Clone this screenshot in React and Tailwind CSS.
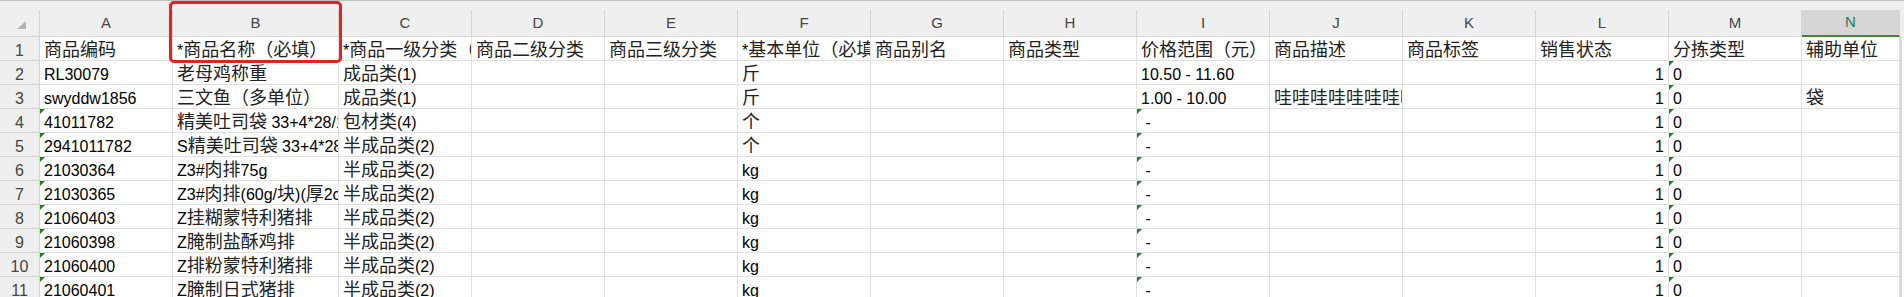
import React from "react";

const cols = [
  { k: "A", w: "w-[133px]" },
  { k: "B", w: "w-[166px]" },
  { k: "C", w: "w-[133px]" },
  { k: "D", w: "w-[133px]" },
  { k: "E", w: "w-[133px]" },
  { k: "F", w: "w-[133px]" },
  { k: "G", w: "w-[133px]" },
  { k: "H", w: "w-[133px]" },
  { k: "I", w: "w-[133px]" },
  { k: "J", w: "w-[133px]" },
  { k: "K", w: "w-[133px]" },
  { k: "L", w: "w-[133px]" },
  { k: "M", w: "w-[133px]" },
  { k: "N", w: "w-[98px]" },
];

const tri = (t) => ({ t, tri: true });
const num = (t) => ({ t, right: true });

const mkRow = (code, name, cat, unit, opts = {}) => [
  opts.codeTri ? tri(code) : code,
  name,
  cat,
  "",
  "",
  unit,
  "",
  "",
  opts.price ? opts.price : tri(" -"),
  opts.desc || "",
  "",
  num("1"),
  tri("0"),
  opts.aux || "",
];

const rows = [
  [
    "商品编码",
    "*商品名称（必填）",
    "*商品一级分类（必填）",
    "商品二级分类",
    "商品三级分类",
    "*基本单位（必填）",
    "商品别名",
    "商品类型",
    "价格范围（元）",
    "商品描述",
    "商品标签",
    "销售状态",
    "分拣类型",
    "辅助单位",
  ],
  mkRow("RL30079", "老母鸡称重", "成品类(1)", "斤", { price: "10.50 - 11.60" }),
  mkRow("swyddw1856", "三文鱼（多单位）", "成品类(1)", "斤", {
    price: "1.00 - 10.00",
    desc: "哇哇哇哇哇哇哇哇哇哇",
    aux: "袋",
  }),
  mkRow("41011782", "精美吐司袋 33+4*28/100个", "包材类(4)", "个", { codeTri: true }),
  mkRow("2941011782", "S精美吐司袋 33+4*28/100个", "半成品类(2)", "个", { codeTri: true }),
  mkRow("21030364", "Z3#肉排75g", "半成品类(2)", "kg", { codeTri: true }),
  mkRow("21030365", "Z3#肉排(60g/块)(厚2cm)", "半成品类(2)", "kg", { codeTri: true }),
  mkRow("21060403", "Z挂糊蒙特利猪排", "半成品类(2)", "kg", { codeTri: true }),
  mkRow("21060398", "Z腌制盐酥鸡排", "半成品类(2)", "kg", { codeTri: true }),
  mkRow("21060400", "Z排粉蒙特利猪排", "半成品类(2)", "kg", { codeTri: true }),
  mkRow("21060401", "Z腌制日式猪排", "半成品类(2)", "kg", { codeTri: true }),
];

// CJK runs are drawn a bit larger, like the sheet's Song font
const Txt = ({ text }) => {
  const parts = text.split(/([\u2E80-\u9FFF\u3000-\u303F\uFF00-\uFFEF]+)/);
  return parts.map((p, i) =>
    i % 2 === 1 ? (
      <span key={i} className="text-[18px] leading-[16px] text-[#222]">
        {p}
      </span>
    ) : (
      <span key={i}>{p}</span>
    )
  );
};

const Cell = ({ col, cell }) => {
  const c = typeof cell === "string" ? { t: cell } : cell;
  return (
    <div
      className={`relative shrink-0 ${col.w} h-[24px] overflow-hidden whitespace-pre border-r border-b border-[#e1e1e1] px-1 pt-[3px] leading-[21px] ${
        c.right ? "text-right" : ""
      }`}
    >
      {c.tri && (
        <div className="absolute top-0 left-0 w-0 h-0 border-t-[5px] border-r-[5px] border-t-[#138a13] border-r-transparent" />
      )}
      <Txt text={c.t} />
    </div>
  );
};

export default function App() {
  return (
    <div className="relative w-[1904px] h-[297px] overflow-hidden bg-white text-[16px] text-black font-['Liberation_Sans','Noto_Sans_CJK_SC',sans-serif]">
      <div className="h-[10px] bg-[#efefef] border-t border-[#bdbdbd]" />

      {/* column headers */}
      <div className="flex h-[27px] bg-[#efefef]">
        <div className="relative shrink-0 w-[40px] h-full border-r border-b border-[#d4d4d4]">
          <svg className="absolute left-[17px] top-[11px]" width="9" height="8" viewBox="0 0 9 8">
            <polygon points="9,0 9,8 0,8" fill="#b3b3b3" />
          </svg>
        </div>
        {cols.map((col) =>
          col.k === "N" ? (
            <div
              key={col.k}
              className={`shrink-0 ${col.w} h-full flex items-center justify-center bg-[#d6d6d6] border-r border-[#d4d4d4] border-b-2 border-b-[#3b8a2c] text-[15px] text-[#1d7a5c]`}
            >
              {col.k}
            </div>
          ) : (
            <div
              key={col.k}
              className={`shrink-0 ${col.w} h-full flex items-center justify-center border-r border-b border-[#d4d4d4] text-[15px] text-[#444]`}
            >
              {col.k}
            </div>
          )
        )}
      </div>

      {/* rows */}
      {rows.map((row, ri) => (
        <div key={ri} className="flex h-[24px]">
          <div className="shrink-0 w-[40px] h-full bg-[#efefef] border-r border-b border-[#d4d4d4] pt-[3px] leading-[21px] text-center text-[16px] text-[#444]">
            {ri + 1}
          </div>
          {cols.map((col, ci) => (
            <Cell key={col.k} col={col} cell={row[ci]} />
          ))}
          <div className="shrink-0 w-[2px] h-full bg-[#d9d9d9]" />
        </div>
      ))}

      {/* highlight box around column B header */}
      <div className="absolute left-[169px] top-[1px] w-[173px] h-[62px] border-[3px] border-[#e4231c] rounded-[5px]" />
    </div>
  );
}
